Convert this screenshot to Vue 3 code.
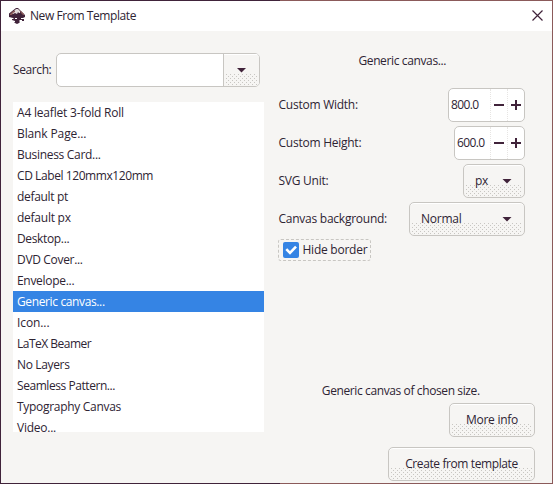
<script setup>
const templates = [
  { name: 'A4 leaflet 3-fold Roll', track: -0.2 },
  { name: 'Blank Page...', track: -0.12 },
  { name: 'Business Card...', track: -0.3 },
  { name: 'CD Label 120mmx120mm', track: -0.42 },
  { name: 'default pt', track: -0.33 },
  { name: 'default px', track: -0.25 },
  { name: 'Desktop...', track: -0.35 },
  { name: 'DVD Cover...', track: -0.33 },
  { name: 'Envelope...', track: -0.3 },
  { name: 'Generic canvas...', track: -0.37, on: true },
  { name: 'Icon...', track: -0.1 },
  { name: 'LaTeX Beamer', track: -0.5 },
  { name: 'No Layers', track: -0.35 },
  { name: 'Seamless Pattern...', track: -0.44 },
  { name: 'Typography Canvas', track: -0.3 },
  { name: 'Video...', track: -0.25 },
]
</script>

<template>
  <div class="window">
    <header class="titlebar">
      <svg class="logo" width="16" height="16" viewBox="0 0 16 16">
        <path fill="#40233a" d="M7 0h2l7 7v2l-2 1-1 1h2v2h-2v-1h-2l-1 1 1 1-1 1-2 1-2-1-1-1h1v-1l-3-1v-1h2l-1-1-4-1-2-2V7z" />
        <path fill="#e3dcdc" d="M7 1h2l2 2v2h-1l-1-1-1 2-2-1-2 1H3V5z" />
        <path fill="#8b5a5a" d="M4 3 1 6v1h2l1-2 2-1V3zM11 3l1 2 2 2h1v-1l-3-3z" />
        <path fill="#fff" d="M6 10h2v1H6zM12 10h2v1h-2z" />
      </svg>
      <span class="title">New From Template</span>
      <svg class="close" width="11" height="11" viewBox="0 0 11 11">
        <path d="M.5.5l10 10M10.5.5l-10 10" stroke="#40233a" stroke-width="1.2" />
      </svg>
    </header>
    <main class="body">
      <section class="left">
        <div class="search">
          <label>Search:</label>
          <div class="combo">
            <div class="entry"></div>
            <div class="drop"><i class="arrow"></i></div>
          </div>
        </div>
        <ul class="list">
          <li v-for="t in templates" :key="t.name" :class="{ on: t.on }" :style="{ letterSpacing: t.track + 'px' }">{{ t.name }}</li>
        </ul>
      </section>
      <section class="right">
        <h2>Generic canvas...</h2>
        <div class="row">
          <label>Custom Width:</label>
          <div class="spin wide"><span class="num">800.0</span><i class="step minus"></i><i class="step plus"></i></div>
        </div>
        <div class="row">
          <label>Custom Height:</label>
          <div class="spin"><span class="num">600.0</span><i class="step minus"></i><i class="step plus"></i></div>
        </div>
        <div class="row">
          <label>SVG Unit:</label>
          <div class="btn select unit"><span>px</span><i class="arrow"></i></div>
        </div>
        <div class="row">
          <label>Canvas background:</label>
          <div class="btn select normal"><span>Normal</span><i class="arrow"></i></div>
        </div>
        <div class="check">
          <svg width="16" height="16" viewBox="0 0 16 16">
            <rect width="16" height="16" rx="2" fill="#3584e4" />
            <path d="M3.3 7.2l3.7 3.8 6-6.3" fill="none" stroke="#fff" stroke-width="2.6" />
          </svg>
          <span>Hide border</span>
        </div>
        <p class="desc">Generic canvas of chosen size.</p>
        <div class="btn more"><span>More info</span></div>
        <div class="btn create"><span>Create from template</span></div>
      </section>
    </main>
  </div>
</template>

<style>
body { margin: 0; overflow: hidden; }
</style>
<style scoped>
* { box-sizing: border-box; }
.window {
  position: relative; width: 553px; height: 484px; background: #f6f5f3; color: #2e2433;
  font: 12px/16px "Open Sans", "Noto Sans", sans-serif;
  display: flex; flex-direction: column; padding: 1px; letter-spacing: -0.25px; white-space: nowrap;
}
.window::after {
  content: ""; position: absolute; inset: 0; pointer-events: none;
  background:
    linear-gradient(90deg, #40233a 280px, #8b5a5a 280px) top / 100% 1px no-repeat,
    linear-gradient(90deg, #40233a 280px, #8b5a5a 280px) bottom / 100% 1px no-repeat,
    linear-gradient(#40233a, #40233a) left / 1px 100% no-repeat,
    linear-gradient(#8b5a5a, #8b5a5a) right / 1px 100% no-repeat;
}
.titlebar { height: 30px; background: #fff; display: flex; align-items: center; padding: 0 9px 0 8px; }
.title { margin-left: 5px; flex: 1; letter-spacing: -0.43px; }
.close { margin-top: -2px; }
.body { flex: 1; display: flex; padding: 22px 15px 0 12px; }
.left { width: 251px; }
.search { display: flex; align-items: center; justify-content: space-between; width: 247px; height: 34px; }
.search label { letter-spacing: -0.4px; }
.combo { display: flex; width: 204px; height: 34px; border: 1px solid #c8c6c2; border-radius: 5px; overflow: hidden; background: #fff; }
.entry { flex: 1; }
.drop { width: 36px; border-left: 1px solid #c8c6c2; display: flex; align-items: center; justify-content: center; position: relative; background: #f6f5f3; box-shadow: inset 0 1px #fff; }
.arrow { width: 10px; height: 5px; background: #40233a; clip-path: polygon(0 0, 100% 0, 50% 100%); position: relative; }
.list { list-style: none; margin: 15px 0 0; padding: 0; height: 330px; overflow: hidden; background: #fff; }
.list li { height: 21px; padding: 3px 4px 2px; }
.list .on { background: #3584e4; color: #fff; }
.right { margin-left: 14px; width: 260px; display: flex; flex-direction: column; }
h2 { font: inherit; margin: 0 0 19px; padding-right: 10px; text-align: center; height: 16px; letter-spacing: -0.37px; }
.row { display: flex; justify-content: space-between; align-items: center; height: 34px; margin-bottom: 4px; padding: 0 12px 0 1px; }
.spin { width: 71px; height: 34px; border: 1px solid #c8c6c2; border-radius: 5px; background: #fff; display: flex; align-items: center; padding-left: 2px; letter-spacing: -0.6px; }
.spin.wide { width: 77px; }
.num { flex: 1; }
.step { width: 17px; height: 32px; border-left: 1px dotted #e7e5e3; background: linear-gradient(#40233a, #40233a) center / 10px 2px no-repeat; }
.plus { background: linear-gradient(#40233a, #40233a) center / 10px 2px no-repeat, linear-gradient(#40233a, #40233a) center / 2px 10px no-repeat; }
.btn { position: relative; height: 34px; border: 1px solid #c8c6c2; border-radius: 5px; display: flex; align-items: center; justify-content: center; background: #f6f5f3; box-shadow: inset 0 1px #fff; }
.btn::before, .drop::before {
  content: ""; position: absolute; left: 2px; right: 2px; bottom: 0; height: 13px;
  background: linear-gradient(#c8c6c2, #c8c6c2) 0 0 / 0 0;
  background-image: conic-gradient(from 270deg at 1px 1px, #c8c6c2 90deg, transparent 0), conic-gradient(from 270deg at 1px 1px, #c8c6c2 90deg, transparent 0);
  background-size: 4px 4px; background-position: 0 1px, 2px 3px; background-repeat: repeat;
}
.btn span { position: relative; }
.select { justify-content: space-between; padding: 0 12px 0 11px; }
.unit { width: 62px; }
.normal { width: 116px; }
.check { width: 93px; height: 22px; border: 1px dashed #c8c6c2; border-radius: 3px; display: flex; align-items: center; gap: 4px; padding-left: 4px; margin-top: -1px; }
.desc { margin: 122px 0 4px; padding-right: 13px; text-align: center; letter-spacing: -0.39px; }
.more { width: 86px; align-self: flex-end; margin-right: 2px; }
.create { width: 147px; align-self: flex-end; margin: 10px 2px 0 0; letter-spacing: -0.4px; }
</style>
